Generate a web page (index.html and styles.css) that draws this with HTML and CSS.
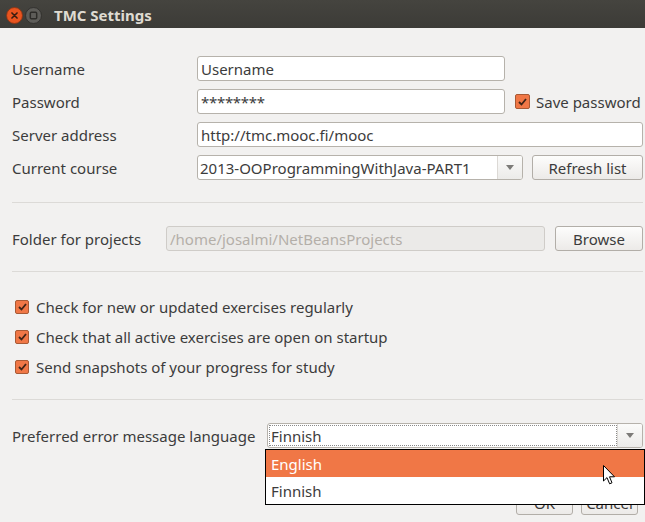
FILE: index.html
```html
<!DOCTYPE html>
<html>
<head>
<meta charset="utf-8">
<title>TMC Settings</title>
<link rel="stylesheet" href="styles.css">
</head>
<body>
<div class="window">
  <div class="titlebar">
    <span class="wbtn close">
      <svg width="17" height="17" viewBox="0 0 16 16"><circle cx="8" cy="8" r="7.5" fill="#e9541f" stroke="#8a3414" stroke-width="0.8"/><path d="M5.6 5.6 L10.4 10.4 M10.4 5.6 L5.6 10.4" stroke="#3a1d10" stroke-width="1.5" stroke-linecap="round"/></svg>
    </span>
    <span class="wbtn max">
      <svg width="17" height="17" viewBox="0 0 16 16"><circle cx="8" cy="8" r="7.5" fill="#5e5d59" stroke="#2e2d2a" stroke-width="0.8"/><rect x="5" y="5" width="6" height="6" rx="1" fill="none" stroke="#2d2c29" stroke-width="1.4"/></svg>
    </span>
    <span class="title">TMC Settings</span>
  </div>

  <div class="content">
    <div class="row">
      <span class="lbl">Username</span>
      <div class="field w-user">Username</div>
    </div>
    <div class="row">
      <span class="lbl">Password</span>
      <div class="field w-user pw">********</div>
      <span class="check save"><span class="box"><svg width="9" height="8" viewBox="0 0 9 8"><path d="M1 4 L3.5 6.5 L8 1" fill="none" stroke="#3f2417" stroke-width="1.8"/></svg></span>Save password</span>
    </div>
    <div class="row">
      <span class="lbl">Server address</span>
      <div class="field grow">http://tmc.mooc.fi/mooc</div>
    </div>
    <div class="row">
      <span class="lbl">Current course</span>
      <div class="combo w-course">
        <span class="combo-text">2013-OOProgrammingWithJava-PART1</span>
        <span class="combo-arrow"><span class="tri"></span></span>
      </div>
      <span class="btn refresh">Refresh list</span>
    </div>

    <div class="sep s1"></div>

    <div class="row folder-row">
      <span class="lbl lbl-folder">Folder for projects</span>
      <div class="field disabled w-folder">/home/josalmi/NetBeansProjects</div>
      <span class="btn browse">Browse</span>
    </div>

    <div class="sep s2"></div>

    <div class="checks">
      <div class="check line"><span class="box"><svg width="9" height="8" viewBox="0 0 9 8"><path d="M1 4 L3.5 6.5 L8 1" fill="none" stroke="#3f2417" stroke-width="1.8"/></svg></span>Check for new or updated exercises regularly</div>
      <div class="check line"><span class="box"><svg width="9" height="8" viewBox="0 0 9 8"><path d="M1 4 L3.5 6.5 L8 1" fill="none" stroke="#3f2417" stroke-width="1.8"/></svg></span>Check that all active exercises are open on startup</div>
      <div class="check line"><span class="box"><svg width="9" height="8" viewBox="0 0 9 8"><path d="M1 4 L3.5 6.5 L8 1" fill="none" stroke="#3f2417" stroke-width="1.8"/></svg></span>Send snapshots of your progress for study</div>
    </div>

    <div class="sep s3"></div>

    <div class="row lang-row">
      <span class="lbl lbl-lang">Preferred error message language</span>
      <div class="combo grow focused">
        <span class="combo-text">Finnish</span>
        <span class="combo-arrow"><span class="tri"></span></span>
      </div>
    </div>

    <div class="actions">
      <span class="btn ok">OK</span>
      <span class="btn cancel">Cancel</span>
    </div>
  </div>

  <div class="popup">
    <div class="opt selected">English</div>
    <div class="opt">Finnish</div>
  </div>

  <svg class="cursor" width="13" height="21" viewBox="0 0 13 21">
    <path d="M0.5 0.5 L0.5 16 L4 12.6 L6.6 18.8 L9 17.8 L6.5 11.8 L11.5 11.8 Z" fill="#ffffff" stroke="#000000" stroke-width="1" stroke-linejoin="miter"/>
  </svg>
</div>
</body>
</html>
```

FILE: styles.css
```css
html, body {
  margin: 0;
  padding: 0;
  background: #f2f1f0;
}

body {
  font-family: "Noto Sans", "DejaVu Sans", sans-serif;
  font-size: 15px;
  color: #3c3c3c;
}

.window {
  position: relative;
  width: 645px;
  height: 522px;
  overflow: hidden;
  background: #f2f1f0;
}

.titlebar {
  height: 28px;
  background: linear-gradient(#45443f, #3c3b37);
  display: flex;
  align-items: center;
  padding-left: 6px;
  box-sizing: border-box;
}

.wbtn {
  width: 17px;
  height: 17px;
  display: flex;
  margin-top: 2px;
}

.wbtn.max {
  margin-left: 2px;
}

.title {
  margin-left: 12px;
  margin-top: 1px;
  font-weight: bold;
  font-size: 15px;
  color: #dfdbd2;
}

.content {
  padding: 28px 2px 0 12px;
  display: flex;
  flex-direction: column;
}

.row {
  display: flex;
  align-items: center;
  height: 25px;
  margin-bottom: 8px;
}

.lbl {
  width: 185px;
  flex: none;
}

.field {
  height: 25px;
  box-sizing: border-box;
  border: 1px solid #b6b2ab;
  border-radius: 3px;
  background: #ffffff;
  padding: 0 3px;
  display: flex;
  align-items: center;
  color: #3c3c3c;
  white-space: nowrap;
}

.pw {
  letter-spacing: -0.3px;
}

.w-user { width: 308px; }
.grow { flex: 1; }
.w-course { width: 326px; }
.w-folder { width: 379px; }

.field.disabled {
  background: #ebeae8;
  border-color: #cfccc8;
  color: #b4afa9;
}

.check {
  display: flex;
  align-items: center;
}

.box {
  width: 14px;
  height: 14px;
  box-sizing: border-box;
  background: #f07746;
  border: 1px solid #a85a35;
  border-radius: 2px;
  display: flex;
  align-items: center;
  justify-content: center;
  margin-right: 7px;
  flex: none;
}

.save {
  margin-left: 10px;
}

.save .box {
  width: 15px;
  height: 15px;
  margin-right: 6px;
}

.combo {
  height: 25px;
  box-sizing: border-box;
  border: 1px solid #b6b2ab;
  border-radius: 3px;
  background: #ffffff;
  display: flex;
}

.combo-text {
  flex: 1;
  display: flex;
  align-items: center;
  padding-left: 2px;
  white-space: nowrap;
  overflow: hidden;
}

.combo-arrow {
  width: 24px;
  border-left: 1px solid #dcd9d5;
  background: linear-gradient(#fbfbfa, #ecebe9);
  border-radius: 0 2px 2px 0;
  display: flex;
  align-items: center;
  justify-content: center;
}

.tri {
  width: 0;
  height: 0;
  border-left: 4px solid transparent;
  border-right: 4px solid transparent;
  border-top: 5px solid #7c7b78;
}

.focused .combo-text {
  border: 1px dotted #8a8a8a;
  margin: 1px 0 1px 1px;
  padding-left: 1px;
}

.btn {
  height: 25px;
  box-sizing: border-box;
  border: 1px solid #b2aea8;
  border-radius: 3px;
  background: linear-gradient(#fdfdfc, #eceae8);
  display: flex;
  align-items: center;
  justify-content: center;
  color: #3c3c3c;
}

.refresh {
  margin-left: 9px;
  flex: 1;
}

.sep {
  height: 1px;
  background: #dcdad7;
}

.s1 { margin-top: 14px; }

.folder-row {
  margin-top: 23px;
  margin-bottom: 0;
}

.lbl-folder {
  width: 154px;
}

.browse {
  margin-left: 10px;
  flex: 1;
}

.s2 { margin-top: 20px; }

.checks {
  margin-top: 20px;
  display: flex;
  flex-direction: column;
}

.check.line {
  height: 30px;
  padding-left: 3px;
}

.s3 { margin-top: 17px; }

.lang-row {
  margin-top: 23px;
  height: 25px;
}

.lbl-lang {
  width: 255px;
}

.actions {
  display: flex;
  justify-content: flex-end;
  gap: 8px;
  margin-top: 34px;
  padding-right: 5px;
}

.ok { width: 57px; }
.cancel { width: 57px; }

.popup {
  position: absolute;
  left: 265px;
  top: 449px;
  width: 380px;
  box-sizing: border-box;
  border: 1px solid #000000;
  background: #ffffff;
}

.opt {
  height: 27px;
  display: flex;
  align-items: center;
  padding-left: 5px;
  color: #3c3c3c;
}

.opt.selected {
  background: #f07746;
  color: #ffffff;
  height: 27px;
}

.cursor {
  position: absolute;
  left: 603px;
  top: 465px;
}
```
